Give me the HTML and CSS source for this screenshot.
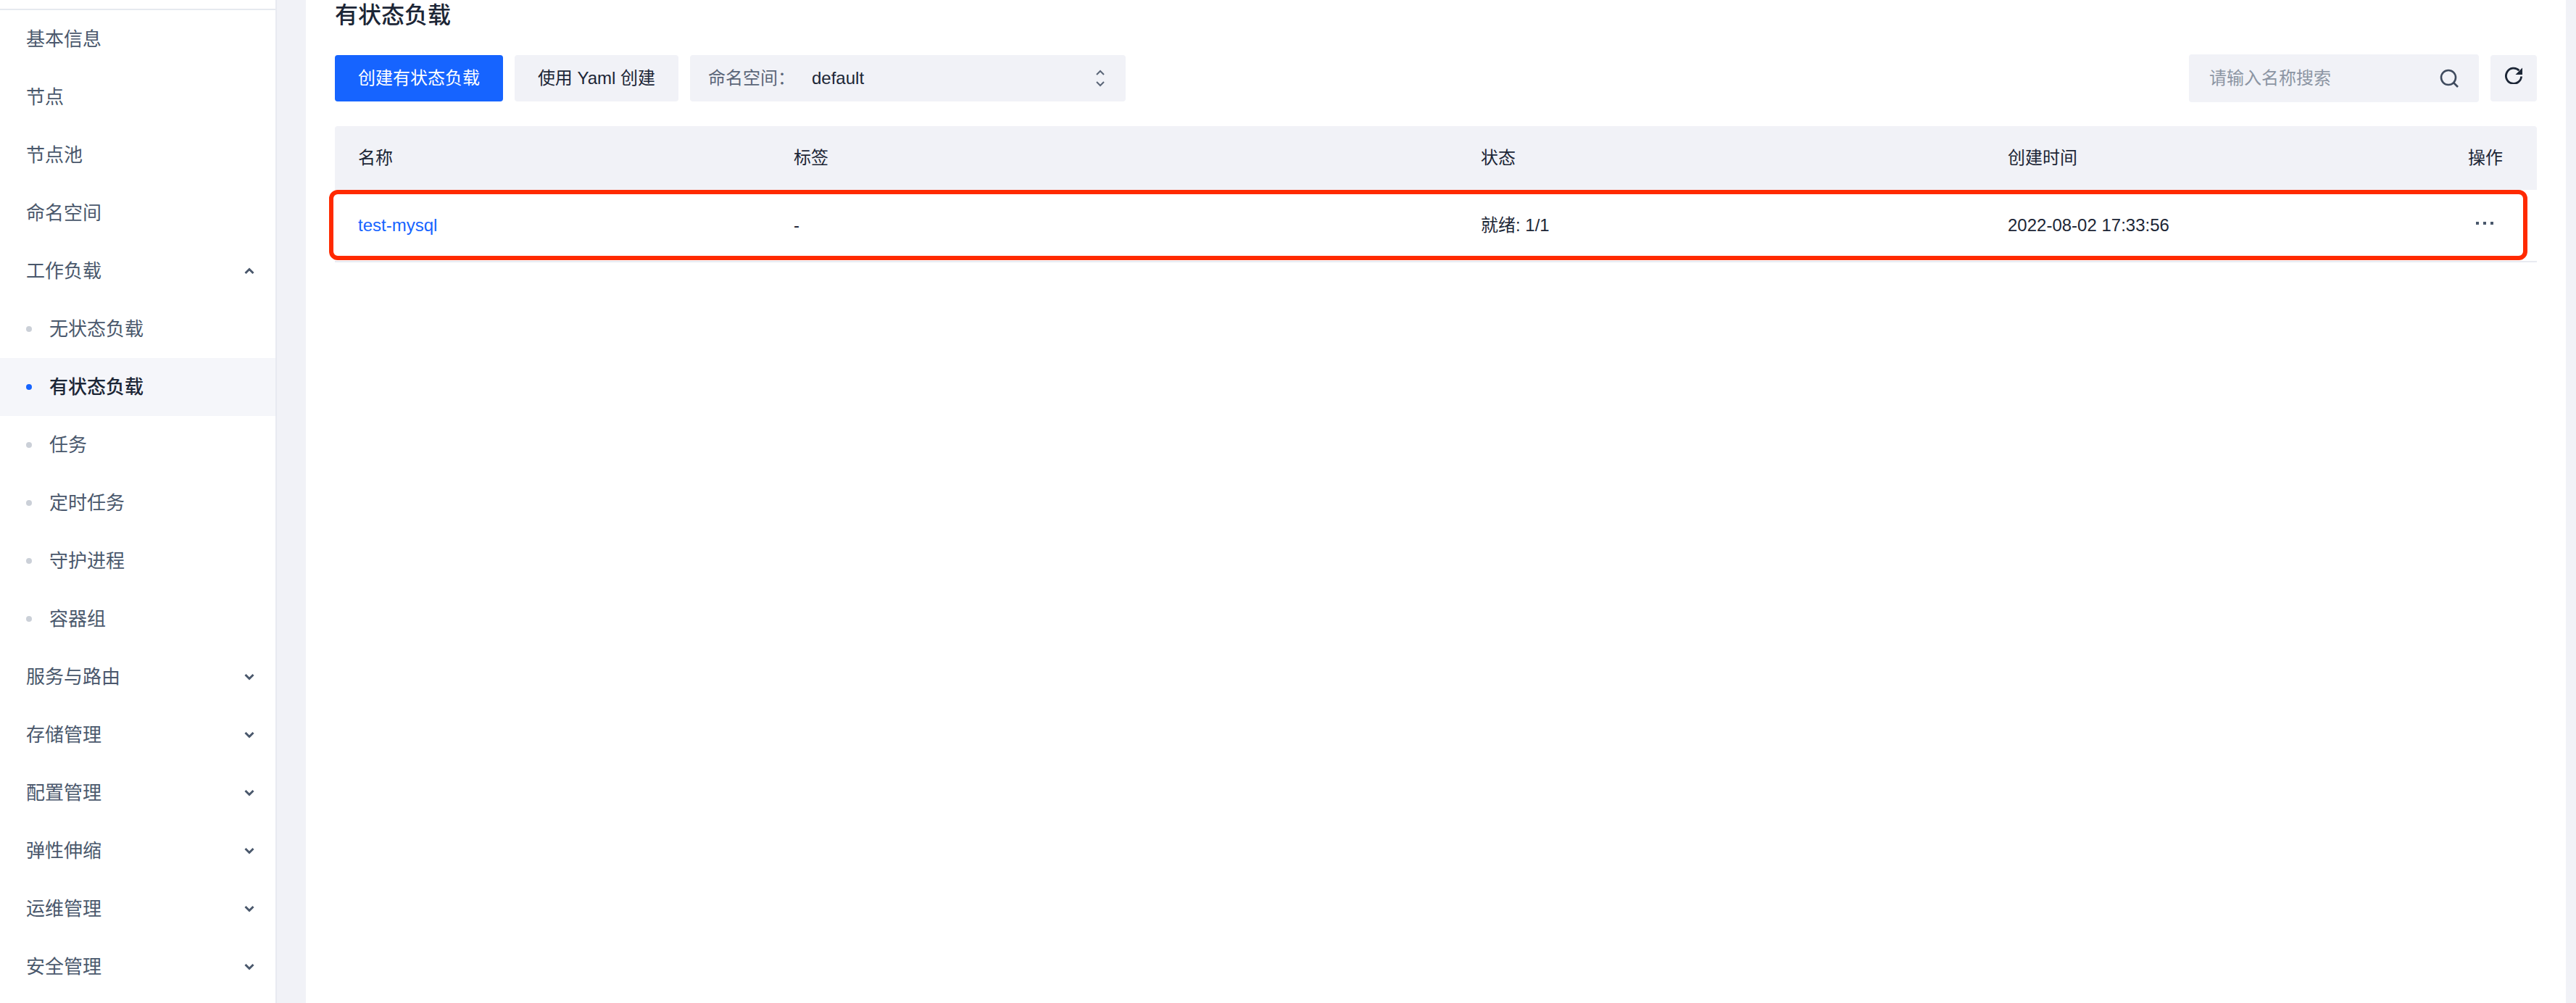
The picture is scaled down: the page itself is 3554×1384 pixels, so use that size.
FILE: index.html
```html
<!DOCTYPE html>
<html lang="zh-CN">
<head>
<meta charset="utf-8">
<title>有状态负载</title>
<link rel="stylesheet" href="styles.css">
</head>
<body>
<div class="app">
  <aside class="sidebar">
    <nav class="menu">
      <a class="item">基本信息</a>
      <a class="item">节点</a>
      <a class="item">节点池</a>
      <a class="item">命名空间</a>
      <a class="item">工作负载<svg class="chev" viewBox="0 0 14 10"><path d="M1.5 8 7 2.5 12.5 8"/></svg></a>
      <a class="item sub"><i class="dot"></i>无状态负载</a>
      <a class="item sub active"><i class="dot"></i>有状态负载</a>
      <a class="item sub"><i class="dot"></i>任务</a>
      <a class="item sub"><i class="dot"></i>定时任务</a>
      <a class="item sub"><i class="dot"></i>守护进程</a>
      <a class="item sub"><i class="dot"></i>容器组</a>
      <a class="item">服务与路由<svg class="chev" viewBox="0 0 14 10"><path d="M1.5 2 7 7.5 12.5 2"/></svg></a>
      <a class="item">存储管理<svg class="chev" viewBox="0 0 14 10"><path d="M1.5 2 7 7.5 12.5 2"/></svg></a>
      <a class="item">配置管理<svg class="chev" viewBox="0 0 14 10"><path d="M1.5 2 7 7.5 12.5 2"/></svg></a>
      <a class="item">弹性伸缩<svg class="chev" viewBox="0 0 14 10"><path d="M1.5 2 7 7.5 12.5 2"/></svg></a>
      <a class="item">运维管理<svg class="chev" viewBox="0 0 14 10"><path d="M1.5 2 7 7.5 12.5 2"/></svg></a>
      <a class="item">安全管理<svg class="chev" viewBox="0 0 14 10"><path d="M1.5 2 7 7.5 12.5 2"/></svg></a>
    </nav>
  </aside>
  <main class="main">
    <h1 class="title">有状态负载</h1>
    <div class="toolbar">
      <button class="btn primary">创建有状态负载</button>
      <button class="btn">使用 Yaml 创建</button>
      <div class="select">
        <span class="select-label">命名空间：</span>
        <span class="select-value">default</span>
        <svg class="updown" viewBox="0 0 14 28"><path d="M2 9 7 4 12 9"/><path d="M2 19 7 24 12 19"/></svg>
      </div>
      <div class="spacer"></div>
      <div class="search">
        <span class="placeholder">请输入名称搜索</span>
        <svg class="search-icon" viewBox="0 0 26 26"><circle cx="12" cy="12" r="10"/><path d="M19 19l6 6"/></svg>
      </div>
      <button class="refresh"><svg class="refresh-icon" viewBox="0 0 24 24"><path d="M19.5 5.2A10.6 10.6 0 1 0 22.6 13.5"/><path class="head" d="M24 1.5v9.5h-9.5z"/></svg></button>
    </div>
    <div class="table">
      <div class="row head-row">
        <div>名称</div><div>标签</div><div>状态</div><div>创建时间</div><div>操作</div>
      </div>
      <div class="row body-row">
        <div class="link">test-mysql</div><div>-</div><div>就绪: 1/1</div><div>2022-08-02 17:33:56</div>
        <div class="more"><i></i><i></i><i></i></div>
      </div>
      <div class="highlight"></div>
    </div>
  </main>
</div>
</body>
</html>
```
FILE: styles.css
```css
* { box-sizing: border-box; }
html, body { margin: 0; height: 100%; }
body {
  background: #f1f2f7;
  font-family: "Liberation Sans", "Noto Sans CJK SC", sans-serif;
  line-height: 32px;
  color: #1c2636;
  overflow: hidden;
}
.app { display: flex; height: 1384px; }
.sidebar {
  width: 382px;
  flex: none;
  background: #fff;
  border-right: 2px solid #e8eaf1;
  padding-top: 12px;
}
.menu { border-top: 2px solid #e6e9ef; }
.item {
  display: flex;
  align-items: center;
  height: 80px;
  padding-left: 36px;
  font-size: 26px;
  color: #4a586c;
}
.dot {
  width: 8px;
  height: 8px;
  border-radius: 50%;
  background: #cbd0d8;
  margin-right: 24px;
  flex: none;
}
.item.active { background: #f5f6fa; color: #1c2636; font-weight: 500; }
.item.active .dot { background: #1664ff; }
.chev {
  width: 14px;
  height: 10px;
  margin-left: auto;
  margin-right: 29px;
  fill: none;
  stroke: #4a586c;
  stroke-width: 3;
}
.main {
  margin-left: 40px;
  width: 3118px;
  flex: none;
  background: #fff;
  padding: 0 40px;
}
.title {
  margin: 0;
  height: 76px;
  font-size: 32px;
  line-height: 42px;
  font-weight: 500;
  color: #1c2636;
}
.toolbar { display: flex; align-items: center; height: 64px; }
.btn {
  height: 64px;
  border: 0;
  border-radius: 4px;
  background: #f1f2f7;
  color: #1c2636;
  font: inherit;
  font-size: 24px;
  width: 226px;
  margin-right: 16px;
  padding: 0;
}
.btn.primary { background: #1664ff; color: #fff; width: 232px; }
.select {
  display: flex;
  align-items: center;
  width: 601px;
  height: 64px;
  background: #f1f2f7;
  border-radius: 4px;
  padding: 0 28px 0 25px;
  font-size: 24px;
}
.select-label { color: #5b6678; width: 143px; }
.select-value { color: #1c2636; }
.updown {
  width: 14px;
  height: 28px;
  margin-left: auto;
  fill: none;
  stroke: #5b6678;
  stroke-width: 2;
}
.spacer { flex: 1; }
.search {
  display: flex;
  align-items: center;
  width: 400px;
  height: 66px;
  background: #f1f2f7;
  border-radius: 4px;
  padding: 0 28px;
  font-size: 24px;
}
.placeholder { color: #8c95a3; }
.search-icon {
  width: 26px;
  height: 26px;
  margin-left: auto;
  fill: none;
  stroke: #3f4b5e;
  stroke-width: 2.6;
}
.refresh {
  width: 64px;
  height: 64px;
  margin-left: 16px;
  border: 0;
  padding: 0 0 8px;
  background: #f1f2f7;
  border-radius: 4px;
  display: flex;
  align-items: center;
  justify-content: center;
}
.refresh-icon { width: 24px; height: 24px; fill: none; stroke: #1c2636; stroke-width: 2.8; }
.refresh-icon .head { fill: #1c2636; stroke: none; }
.table { position: relative; margin-top: 34px; }
.row {
  display: grid;
  grid-template-columns: 601px 948px 727px 1fr 95px;
  align-items: center;
  padding-left: 32px;
  font-size: 24px;
  color: #1c2636;
}
.head-row { height: 88px; background: #f1f2f7; border-radius: 4px 4px 0 0; }
.body-row { height: 100px; border-bottom: 2px solid #e8eaf1; }
.link { color: #1664ff; }
.more { display: flex; gap: 6px; padding: 0 0 6px 11px; }
.more i { width: 4px; height: 4px; background: #4a586c; display: block; }
.highlight {
  position: absolute;
  left: -8px;
  top: 88px;
  width: 3033px;
  height: 97px;
  border: 6px solid #ff2a00;
  border-radius: 12px;
}
```
